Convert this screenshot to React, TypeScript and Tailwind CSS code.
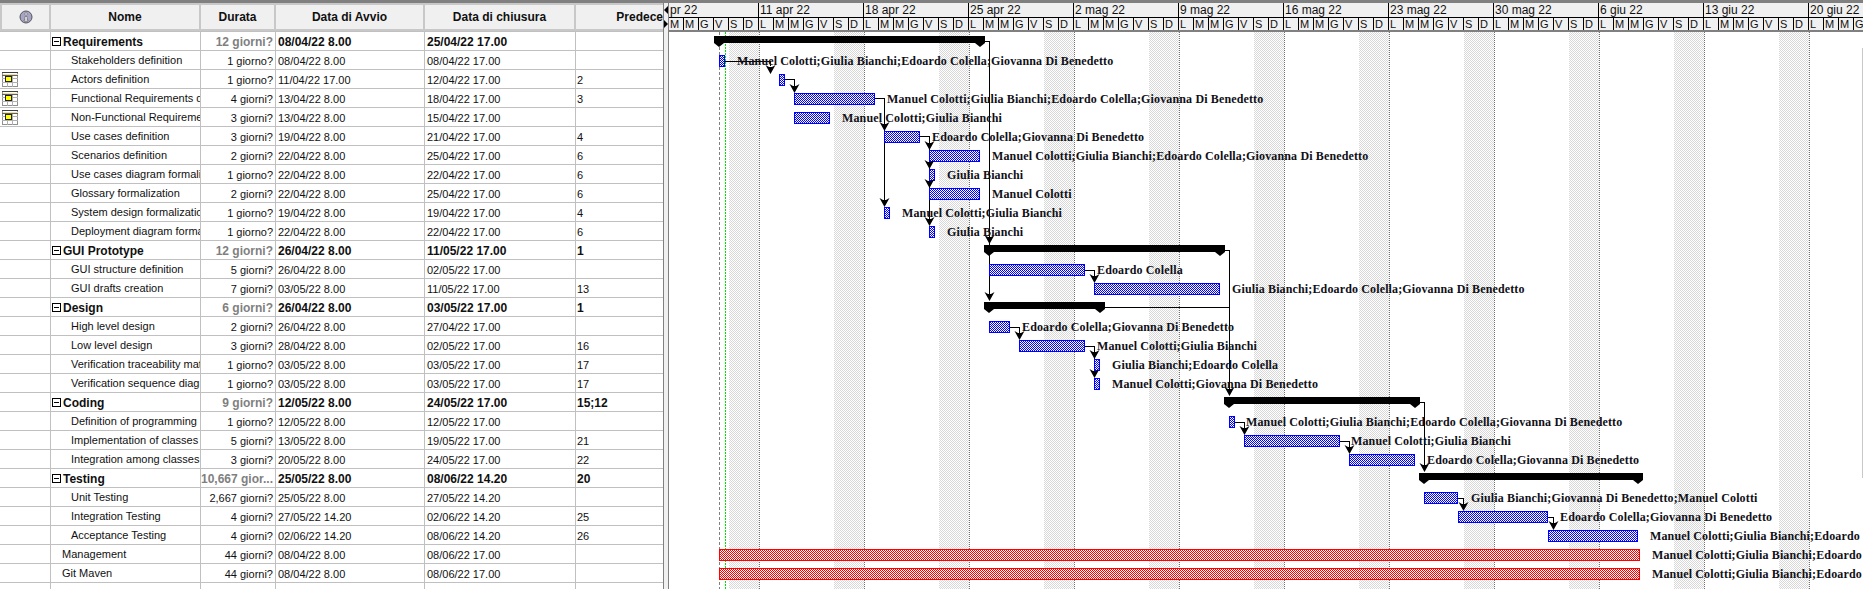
type Row = {
  name: string;
  dur: string;
  start: string;
  end: string;
  pred?: string;
  kind?: "sum" | "top";
  icon?: boolean;
  label?: string;
  labelX?: number;
};

const MC = "Manuel Colotti";
const GB = "Giulia Bianchi";
const EC = "Edoardo Colella";
const GD = "Giovanna Di Benedetto";
const ALL = [MC, GB, EC, GD].join(";");

const rows: Row[] = [
  { name: "Requirements", dur: "12 giorni?", start: "08/04/22 8.00", end: "25/04/22 17.00", kind: "sum" },
  { name: "Stakeholders definition", dur: "1 giorno?", start: "08/04/22 8.00", end: "08/04/22 17.00", label: ALL, labelX: 737 },
  { name: "Actors definition", dur: "1 giorno?", start: "11/04/22 17.00", end: "12/04/22 17.00", pred: "2", icon: true },
  { name: "Functional Requirements definition", dur: "4 giorni?", start: "13/04/22 8.00", end: "18/04/22 17.00", pred: "3", icon: true, label: ALL, labelX: 887 },
  { name: "Non-Functional Requirements", dur: "3 giorni?", start: "13/04/22 8.00", end: "15/04/22 17.00", icon: true, label: `${MC};${GB}`, labelX: 842 },
  { name: "Use cases definition", dur: "3 giorni?", start: "19/04/22 8.00", end: "21/04/22 17.00", pred: "4", label: `${EC};${GD}`, labelX: 932 },
  { name: "Scenarios definition", dur: "2 giorni?", start: "22/04/22 8.00", end: "25/04/22 17.00", pred: "6", label: ALL, labelX: 992 },
  { name: "Use cases diagram formalization", dur: "1 giorno?", start: "22/04/22 8.00", end: "22/04/22 17.00", pred: "6", label: GB, labelX: 947 },
  { name: "Glossary formalization", dur: "2 giorni?", start: "22/04/22 8.00", end: "25/04/22 17.00", pred: "6", label: MC, labelX: 992 },
  { name: "System design formalization", dur: "1 giorno?", start: "19/04/22 8.00", end: "19/04/22 17.00", pred: "4", label: `${MC};${GB}`, labelX: 902 },
  { name: "Deployment diagram formalization", dur: "1 giorno?", start: "22/04/22 8.00", end: "22/04/22 17.00", pred: "6", label: GB, labelX: 947 },
  { name: "GUI Prototype", dur: "12 giorni?", start: "26/04/22 8.00", end: "11/05/22 17.00", pred: "1", kind: "sum" },
  { name: "GUI structure definition", dur: "5 giorni?", start: "26/04/22 8.00", end: "02/05/22 17.00", label: EC, labelX: 1097 },
  { name: "GUI drafts creation", dur: "7 giorni?", start: "03/05/22 8.00", end: "11/05/22 17.00", pred: "13", label: `${GB};${EC};${GD}`, labelX: 1232 },
  { name: "Design", dur: "6 giorni?", start: "26/04/22 8.00", end: "03/05/22 17.00", pred: "1", kind: "sum" },
  { name: "High level design", dur: "2 giorni?", start: "26/04/22 8.00", end: "27/04/22 17.00", label: `${EC};${GD}`, labelX: 1022 },
  { name: "Low level design", dur: "3 giorni?", start: "28/04/22 8.00", end: "02/05/22 17.00", pred: "16", label: `${MC};${GB}`, labelX: 1097 },
  { name: "Verification traceability matrix", dur: "1 giorno?", start: "03/05/22 8.00", end: "03/05/22 17.00", pred: "17", label: `${GB};${EC}`, labelX: 1112 },
  { name: "Verification sequence diagram", dur: "1 giorno?", start: "03/05/22 8.00", end: "03/05/22 17.00", pred: "17", label: `${MC};${GD}`, labelX: 1112 },
  { name: "Coding", dur: "9 giorni?", start: "12/05/22 8.00", end: "24/05/22 17.00", pred: "15;12", kind: "sum" },
  { name: "Definition of programming patterns", dur: "1 giorno?", start: "12/05/22 8.00", end: "12/05/22 17.00", label: ALL, labelX: 1246 },
  { name: "Implementation of classes", dur: "5 giorni?", start: "13/05/22 8.00", end: "19/05/22 17.00", pred: "21", label: `${MC};${GB}`, labelX: 1351 },
  { name: "Integration among classes", dur: "3 giorni?", start: "20/05/22 8.00", end: "24/05/22 17.00", pred: "22", label: `${EC};${GD}`, labelX: 1427 },
  { name: "Testing", dur: "10,667 gior...", start: "25/05/22 8.00", end: "08/06/22 14.20", pred: "20", kind: "sum" },
  { name: "Unit Testing", dur: "2,667 giorni?", start: "25/05/22 8.00", end: "27/05/22 14.20", label: `${GB};${GD};${MC}`, labelX: 1471 },
  { name: "Integration Testing", dur: "4 giorni?", start: "27/05/22 14.20", end: "02/06/22 14.20", pred: "25", label: `${EC};${GD}`, labelX: 1560 },
  { name: "Acceptance Testing", dur: "4 giorni?", start: "02/06/22 14.20", end: "08/06/22 14.20", pred: "26", label: `${MC};${GB};Edoardo`, labelX: 1650 },
  { name: "Management", dur: "44 giorni?", start: "08/04/22 8.00", end: "08/06/22 17.00", kind: "top", label: `${MC};${GB};Edoardo`, labelX: 1652 },
  { name: "Git Maven", dur: "44 giorni?", start: "08/04/22 8.00", end: "08/06/22 17.00", kind: "top", label: `${MC};${GB};Edoardo`, labelX: 1652 },
];

const weeks = ["pr 22", "11 apr 22", "18 apr 22", "25 apr 22", "2 mag 22", "9 mag 22", "16 mag 22", "23 mag 22", "30 mag 22", "6 giu 22", "13 giu 22", "20 giu 22"];
const dayLetters = ["L", "M", "M", "G", "V", "S", "D"];
const days = Array.from({ length: 80 }, (_, i) => dayLetters[(i + 1) % 7]);

// page x of a date: one day is 15px wide, 4 apr is day 0
const dateX = (stamp: string) => {
  const [date, time] = stamp.split(" ");
  const [dd, mm] = date.split("/").map(Number);
  const [hh, min] = time.split(".").map(Number);
  const d = mm === 4 ? dd - 4 : mm === 5 ? dd + 26 : dd + 57;
  return Math.round(654.3 + 15 * (d + (hh + min / 60) / 24));
};
const startX = (stamp: string) => {
  // a task that starts at end of day is drawn from the next morning
  if (stamp.endsWith(" 17.00")) {
    return dateX(stamp) + 9;
  }
  return dateX(stamp);
};
const rowTop = (i: number) => 32 + 19 * i;

const links = [
  "M725 61.5H770.5V66", "M785 79.5H794.5V86", "M875 98.5H884.5V200", "M920 136.5H929.5V220",
  "M985 41.5H989.5V295", "M1085 270.5H1094.5V276", "M1225 250.5H1229.5V390", "M1105 307.5H1229.5",
  "M1010 327.5H1019.5V333", "M1085 346.5H1094.5V372", "M1235 422.5H1244.5V428", "M1340 441.5H1349.5V447",
  "M1420 402.5H1424.5V466", "M1458 498.5H1463.5V504", "M1548 517.5H1553.5V523",
];
const arrows = [
  [770, 74], [794, 93], [884, 131], [884, 207], [929, 150], [929, 169], [929, 188], [929, 226],
  [989, 244], [989, 301], [1094, 283], [1229, 396], [1019, 340], [1094, 359], [1094, 378], [1244, 435],
  [1349, 454], [1424, 472], [1463, 511], [1553, 530],
];

const InfoIcon = () => (
  <svg width="14" height="14" viewBox="0 0 14 14">
    <circle cx="7" cy="7" r="6" fill="#a8a4c4" stroke="#55555f" />
    <circle cx="7" cy="4" r="1.2" fill="#fff" stroke="#444" strokeWidth="0.5" />
    <path d="M6 6.5h2v3.5h1v1h-4v-1h1z" fill="#fff" stroke="#444" strokeWidth="0.5" />
  </svg>
);

const CalendarIcon = () => (
  <svg width="16" height="15" viewBox="0 0 16 15" shapeRendering="crispEdges">
    <rect x="0.5" y="0.5" width="15" height="14" fill="#fff" stroke="#909090" />
    <path d="M0 6.5H16M0 10.5H16M5.5 3V15M10.5 3V15" stroke="#b0b0b0" />
    <rect x="0" y="0" width="16" height="1" fill="#404040" />
    <rect x="0.5" y="1.5" width="15" height="1" fill="#f0e0a0" />
    <rect x="0" y="3" width="16" height="1" fill="#606060" />
    <rect x="3.5" y="4.5" width="6" height="5" fill="#ffff00" stroke="#222" />
  </svg>
);

const ChartBody = () => {
  const weekends = Array.from({ length: 11 }, (_, k) => 729 + 105 * k);
  return (
    <svg width="1194" height="557" viewBox="669 32 1194 557" className="block" shapeRendering="crispEdges">
      <defs>
        <pattern id="blueDither" width="2" height="2" patternUnits="userSpaceOnUse">
          <rect width="2" height="2" fill="#ffffff" />
          <rect width="1" height="1" fill="#0000ff" />
          <rect x="1" y="1" width="1" height="1" fill="#0000ff" />
        </pattern>
        <pattern id="redDither" width="2" height="2" patternUnits="userSpaceOnUse">
          <rect width="2" height="2" fill="#ffffff" />
          <rect width="1" height="1" fill="#ff0000" />
          <rect x="1" y="1" width="1" height="1" fill="#ff0000" />
        </pattern>
        <pattern id="greyDither" width="2" height="2" patternUnits="userSpaceOnUse">
          <rect width="2" height="2" fill="#ffffff" />
          <rect width="1" height="1" fill="#d8d8d8" />
          <rect x="1" y="1" width="1" height="1" fill="#d8d8d8" />
        </pattern>
      </defs>

      {weekends.map((x) => (
        <g key={x}>
          <rect x={x} y={32} width={30} height={557} fill="url(#greyDither)" />
          <path d={`M${x + 30.5} 32V589`} stroke="#707070" strokeDasharray="1 1" />
        </g>
      ))}
      <path d="M719.5 32V589" stroke="#808080" strokeDasharray="3 2" />
      <path d="M725.5 32V589" stroke="#00e000" strokeDasharray="2 1" />
      <path d="M1862.5 48V478" stroke="#c8c8c8" />

      {links.map((d) => (
        <path key={d} d={d} fill="none" stroke="#000000" />
      ))}

      {rows.map((r, i) => {
        const top = rowTop(i);
        const x0 = startX(r.start);
        const x1 = dateX(r.end);
        if (r.kind === "sum") {
          return (
            <polygon
              key={r.name}
              shapeRendering="auto"
              points={`${x0 - 5},${top + 4} ${x1 + 5},${top + 4} ${x1 + 5},${top + 11} ${x1},${top + 15} ${x1 - 5},${top + 11} ${x0 + 5},${top + 11} ${x0},${top + 15} ${x0 - 5},${top + 11}`}
              fill="#000000"
            />
          );
        }
        const red = r.kind === "top";
        return (
          <rect
            key={r.name}
            x={x0 + 0.5}
            y={top + 4.5}
            width={x1 - x0 - 1}
            height={11}
            fill={red ? "url(#redDither)" : "url(#blueDither)"}
            stroke={red ? "#ff0000" : "#0000ff"}
          />
        );
      })}

      {arrows.map(([x, y]) => (
        <polygon
          key={`${x}-${y}`}
          shapeRendering="auto"
          points={`${x + 0.5},${y} ${x - 4.5},${y - 9} ${x - 1},${y - 7} ${x + 2},${y - 7} ${x + 5.5},${y - 9}`}
          fill="#000000"
        />
      ))}

      {rows.map((r, i) =>
        r.label ? (
          <text
            key={r.name}
            x={r.labelX}
            y={rowTop(i) + 14}
            fill="#101018"
            shapeRendering="auto"
            className="font-['Liberation_Serif',serif] text-[12px] font-bold tracking-[0.14px]"
          >
            {r.label}
          </text>
        ) : null
      )}
    </svg>
  );
};

export default function App() {
  return (
    <div className="h-[589px] w-[1863px] overflow-hidden bg-white font-['Liberation_Sans',sans-serif] text-[11px] text-[#101010]">
      <div className="h-[3px] bg-[#808080]" />
      <div className="flex h-[586px]">
        {/* task table */}
        <div className="w-[663px] shrink-0 overflow-hidden">
          <div className="flex h-[29px] border-b border-[#c0c0c0] bg-[#f0f0f0] text-[12px] font-bold">
            <div className="flex w-[51px] items-center justify-center border-x-2 border-y-2 border-[#c8c8c8]">
              <InfoIcon />
            </div>
            <div className="flex w-[150px] items-center justify-center border-y-2 border-r-2 border-[#c8c8c8]">Nome</div>
            <div className="flex w-[75px] items-center justify-center border-y-2 border-r-2 border-[#c8c8c8]">Durata</div>
            <div className="flex w-[149px] items-center justify-center border-y-2 border-r-2 border-[#c8c8c8]">Data di Avvio</div>
            <div className="flex w-[151px] items-center justify-center border-y-2 border-r-2 border-[#c8c8c8]">Data di chiusura</div>
            <div className="flex w-[87px] items-center justify-end overflow-hidden border-y-2 border-[#c8c8c8] whitespace-nowrap">Predece</div>
          </div>
          {rows.map((r) => {
            const bold = r.kind === "sum" ? "font-bold text-[12px]" : "";
            return (
              <div key={r.name} className={`flex h-[19px] items-center border-b border-[#c0c0c0] whitespace-nowrap ${bold}`}>
                <div className="flex h-full w-[51px] items-center border-r border-[#c0c0c0] pl-[2px]">
                  {r.icon && <CalendarIcon />}
                </div>
                <div
                  className={`flex h-full w-[150px] items-center overflow-hidden border-r border-[#c0c0c0] pt-[1px] ${
                    r.kind === "sum" ? "pl-[1px]" : r.kind === "top" ? "pl-[11px]" : "pl-[20px]"
                  }`}
                >
                  {r.kind === "sum" && (
                    <span className="mr-[2px] flex h-[9px] w-[9px] shrink-0 items-center justify-center border border-black">
                      <span className="h-px w-[5px] bg-black" />
                    </span>
                  )}
                  {r.name}
                </div>
                <div className={`h-full w-[75px] overflow-hidden border-r border-[#c0c0c0] pr-[2px] text-right leading-[20px] ${r.kind === "sum" ? "text-[#808080]" : ""}`}>
                  {r.dur}
                </div>
                <div className="h-full w-[149px] overflow-hidden border-r border-[#c0c0c0] pl-[2px] leading-[20px]">{r.start}</div>
                <div className="h-full w-[151px] overflow-hidden border-r border-[#c0c0c0] pl-[2px] leading-[20px]">{r.end}</div>
                <div className="h-full flex-1 pl-[1px] leading-[20px]">{r.pred}</div>
              </div>
            );
          })}
          <div className="flex h-[19px]">
            <div className="w-[51px] border-r border-[#c0c0c0]" />
            <div className="w-[150px] border-r border-[#c0c0c0]" />
            <div className="w-[75px] border-r border-[#c0c0c0]" />
            <div className="w-[149px] border-r border-[#c0c0c0]" />
            <div className="w-[151px] border-r border-[#c0c0c0]" />
          </div>
        </div>

        {/* splitter */}
        <div className="flex w-[6px] shrink-0 flex-col items-center gap-[6px] border-x border-[#808080] bg-[#f0f0f0] pt-[3px]">
          <span className="h-0 w-0 border-y-[4px] border-r-[4px] border-y-transparent border-r-black" />
          <span className="h-0 w-0 border-y-[4px] border-l-[4px] border-y-transparent border-l-black" />
        </div>

        {/* gantt */}
        <div className="min-w-0 flex-1 overflow-hidden">
          <div className="flex h-[15px] border-b border-black bg-[#f0f0f0] text-[12px] leading-[15px]">
            {weeks.map((w, i) => (
              <div key={w} className={`shrink-0 overflow-hidden border-r border-black pl-[1px] whitespace-nowrap ${i === 0 ? "w-[90px]" : "w-[105px]"}`}>
                {w}
              </div>
            ))}
          </div>
          <div className="flex h-[14px] border-b-2 border-[#808080] bg-[#f0f0f0] text-[11px] leading-[13px]">
            {days.map((d, i) => (
              <div key={i} className="w-[15px] shrink-0 overflow-hidden border-r border-black pl-[1px]">
                {d}
              </div>
            ))}
          </div>
          <ChartBody />
        </div>
      </div>
    </div>
  );
}
